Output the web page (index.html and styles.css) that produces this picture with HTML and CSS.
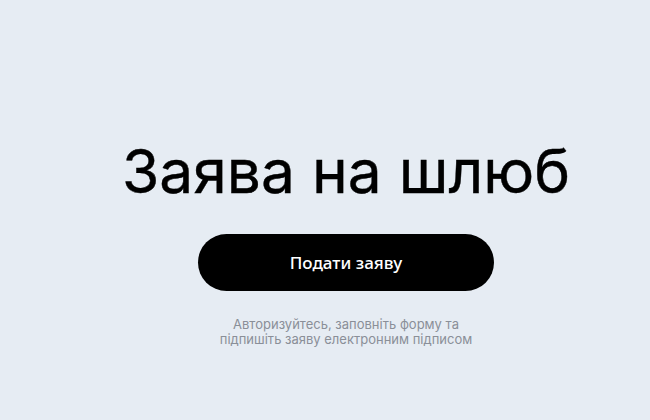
FILE: index.html
```html
<!DOCTYPE html>
<html lang="uk">
<head>
<meta charset="utf-8">
<link rel="stylesheet" href="styles.css">
</head>
<body>
<main class="page">
  <h1 class="title">Заява на шлюб</h1>
  <button class="cta">Подати заяву</button>
  <p class="note">Авторизуйтесь, заповніть форму та<br>підпишіть заяву електронним підписом</p>
</main>
</body>
</html>
```
FILE: styles.css
```css
html, body {
  margin: 0;
  padding: 0;
  background: #e6ecf3;
}
.page {
  width: 650px;
  height: 420px;
  box-sizing: border-box;
  padding-left: 42px;
  padding-top: 136px;
  display: flex;
  flex-direction: column;
  align-items: center;
}
.title {
  margin: 0;
  font-family: "Inter", "Noto Sans", sans-serif;
  font-weight: 400;
  font-size: 60.5px;
  line-height: 70px;
  color: #000;
  -webkit-text-stroke: 0.4px #000;
}
.cta {
  margin-top: 28px;
  width: 296px;
  height: 57px;
  border: none;
  border-radius: 29px;
  background: #000;
  color: #fff;
  font-family: "Noto Sans", "Liberation Sans", sans-serif;
  font-weight: 500;
  font-size: 17px;
}
.note {
  margin: 26px 0 0;
  font-family: "Inter", "Noto Sans", sans-serif;
  font-size: 13px;
  line-height: 15px;
  color: #8a8f98;
  text-align: center;
}
```
